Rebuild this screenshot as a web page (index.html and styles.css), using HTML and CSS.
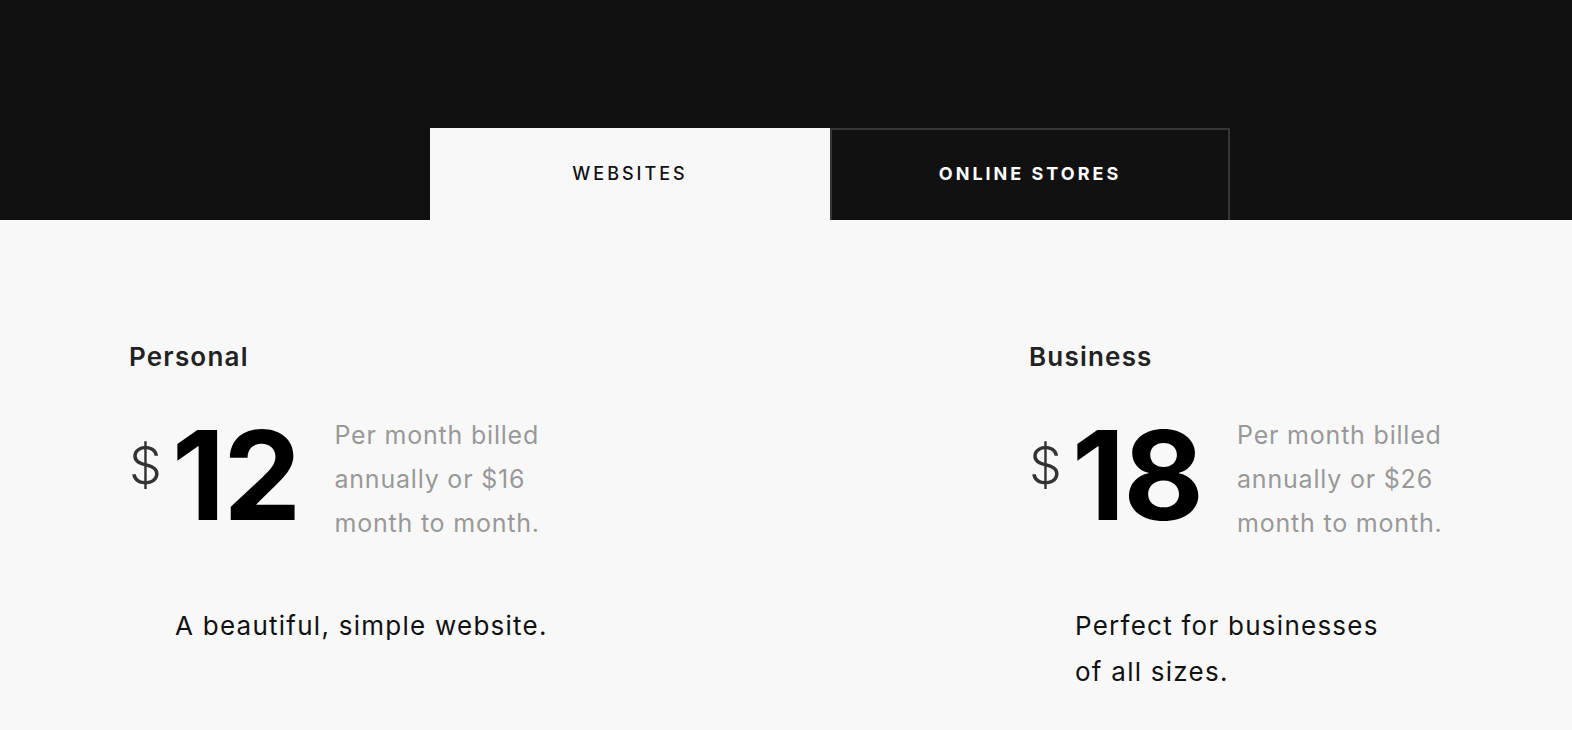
FILE: index.html
```html
<!DOCTYPE html>
<html lang="en">
<head>
    <meta charset="UTF-8">
    <meta name="viewport" content="width=device-width, initial-scale=1.0">
    <title>Pricing</title>
    <link rel="stylesheet" href="styles.css">
</head>
<body>
    <div class="top-bar">
        <div class="tabs">
            <button class="tab active">Websites</button>
            <button class="tab">Online Stores</button>
        </div>
    </div>

    <div class="plans">
        <div class="plan">
            <h2>Personal</h2>
            <div class="price-row">
                <div class="price">
                    <span class="currency">$</span>
                    <span class="amount">12</span>
                </div>
                <p class="billing">Per month billed<br>annually or $16<br>month to month.</p>
            </div>
            <p class="plan-desc">A beautiful, simple website.</p>
        </div>

        <div class="plan">
            <h2>Business</h2>
            <div class="price-row">
                <div class="price">
                    <span class="currency">$</span>
                    <span class="amount">18</span>
                </div>
                <p class="billing">Per month billed<br>annually or $26<br>month to month.</p>
            </div>
            <p class="plan-desc">Perfect for businesses<br>of all sizes.</p>
        </div>
    </div>
</body>
</html>
```

FILE: styles.css
```css
body {
    margin: 0;
    font-family: Inter, "Noto Sans", sans-serif;
    background-color: #f8f8f8;
    color: #111;
}
.top-bar {
    background: #111;
    height: 220px;
    display: flex;
    justify-content: center;
    align-items: flex-end;
    padding-left: 88px;
    box-sizing: border-box;
}
.tabs {
    display: flex;
}
.tab {
    width: 400px;
    height: 92px;
    font-family: inherit;
    font-size: 18px;
    letter-spacing: 3px;
    text-transform: uppercase;
    border: 2px solid #363636;
    border-bottom: none;
    background: #111;
    color: #fff;
    font-weight: 700;
    cursor: pointer;
    padding: 0 0 4px;
}
.tab.active {
    background: #f8f8f8;
    color: #111;
    border-color: #f8f8f8;
    font-weight: 500;
}
.plans {
    display: grid;
    grid-template-columns: 900px 1fr;
    padding: 122px 129px 0;
}
.plan h2 {
    margin: 0;
    font-size: 26px;
    font-weight: 600;
    line-height: 29px;
    letter-spacing: 1.2px;
    color: #222;
}
.price-row {
    display: flex;
    align-items: flex-start;
    margin-top: 37px;
}
.price {
    display: flex;
    align-items: flex-start;
}
.currency {
    font-size: 52px;
    font-weight: 300;
    line-height: 1;
    color: #333;
    margin-top: 32px;
}
.amount {
    font-size: 124px;
    font-weight: 700;
    line-height: 1;
    letter-spacing: -2px;
    color: #000;
    margin: 5px 0 0 10px;
}
.billing {
    margin: 5px 0 0 35px;
    font-size: 25px;
    line-height: 44px;
    letter-spacing: 0.8px;
    color: #999;
}
.plan-desc {
    margin: 58px 0 0 46px;
    font-size: 26px;
    line-height: 46px;
    letter-spacing: 1.25px;
    color: #111;
}
```
